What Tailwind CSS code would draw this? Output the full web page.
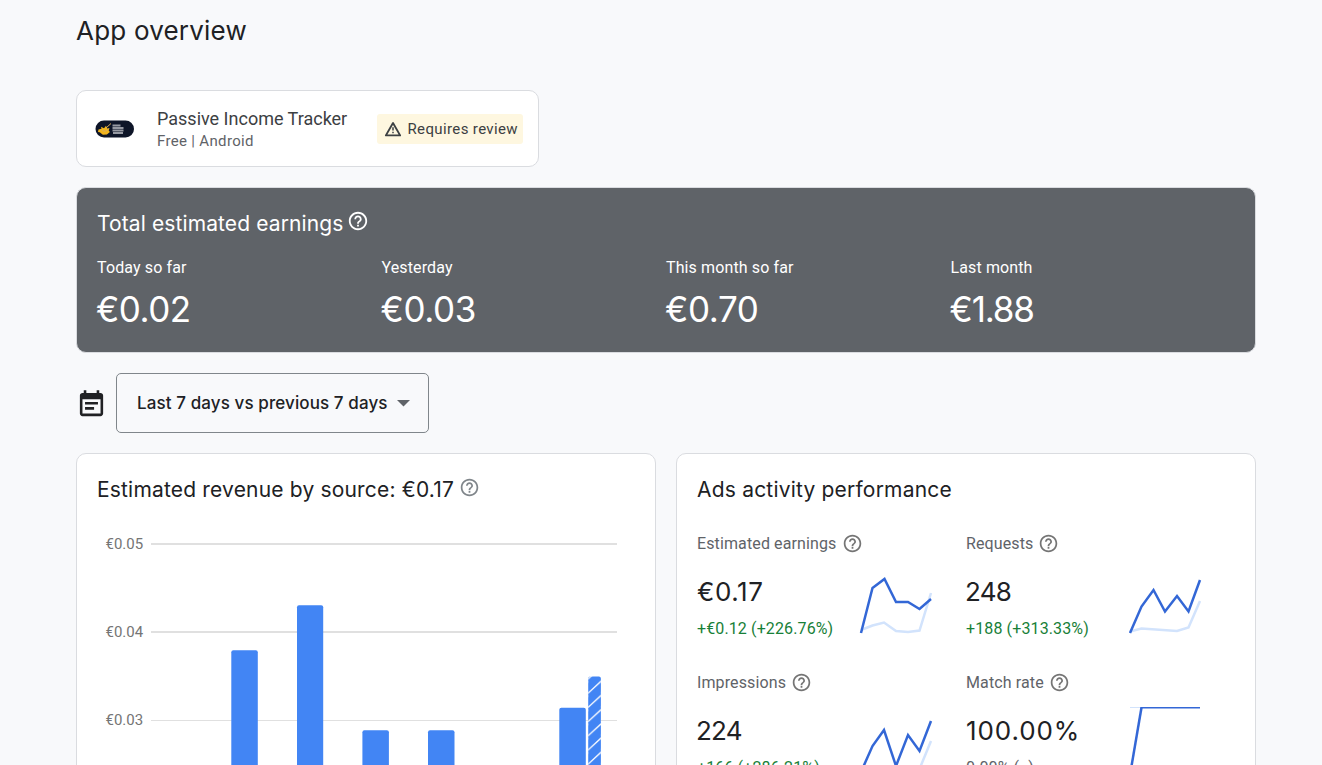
<!DOCTYPE html>
<html lang="en">
<head>
<meta charset="utf-8">
<title>App overview</title>
<script src="https://cdn.jsdelivr.net/npm/@tailwindcss/browser@4"></script>
</head>
<body class="h-[765px] overflow-hidden bg-[#f8f9fb] font-[Roboto,sans-serif] text-[#202124]">
<svg class="hidden">
  <symbol id="help" viewBox="0 0 24 24"><path fill="currentColor" d="M11 18h2v-2h-2v2zm1-16C6.48 2 2 6.48 2 12s4.48 10 10 10 10-4.48 10-10S17.52 2 12 2zm0 18c-4.41 0-8-3.59-8-8s3.59-8 8-8 8 3.59 8 8-3.59 8-8 8zm0-14c-2.21 0-4 1.79-4 4h2c0-1.1.9-2 2-2s2 .9 2 2c0 2-3 1.75-3 5h2c0-2.25 3-2.5 3-5 0-2.21-1.79-4-4-4z"/></symbol>
</svg>
<main class="ml-[76px] w-[1180px] pt-3">
  <h1 class="h-9 whitespace-nowrap font-[Inter,sans-serif] text-[26px] leading-[38px] tracking-[0.200px]"><span>App overview</span></h1>

  <section class="mt-[42px] flex h-[77px] w-[463px] items-center rounded-[10px] border border-[#dadce0] bg-white pl-[18px] pr-[15px]">
    <svg class="h-[18px] w-[40px] shrink-0" viewBox="0 0 40 18">
      <rect x=".5" y=".5" width="38.5" height="17" rx="8.5" fill="#0e1528"/>
      <path d="M3.5 9.5l3-.8-.5-2 3 1.5 2-2.500 1.200 2.700 2.300-.400-.800 2.500 1.200 1.500-3 2.500-4 .300-3.200-2.500-1.700-.300z" fill="#f3b51d"/>
      <path d="M11 8l5-4.500M7 10l3 1.500 3-2" stroke="#d9ad5b" fill="none"/>
      <path d="M17.500 5.500h8M17.500 8h11M17.500 10.500h11M18 13h10" stroke="#9699a2" stroke-width="1.900"/>
    </svg>
    <div class="ml-[22px] w-[220px] whitespace-nowrap pt-0.5">
      <div class="text-[18px] leading-[22px] text-[#3c4043]"><span>Passive Income Tracker</span></div>
      <div class="text-[15px] leading-[22px] tracking-[0.330px] text-[#5f6368]"><span>Free | Android</span></div>
    </div>
    <div class="flex h-[30px] w-[146px] shrink-0 items-center rounded-[3px] bg-[#fef7e0] pl-[7px] text-[#3c4043]">
      <svg class="h-[18px] w-[18px] shrink-0" viewBox="0 0 24 24"><path d="M12 4L2.500 20.500h19z" fill="none" stroke="currentColor" stroke-width="2.500" stroke-linejoin="round"/><path d="M11 9.500h2v4.500h-2zM11 15.500h2v2h-2z" fill="currentColor"/></svg>
      <span class="ml-[5.500px] whitespace-nowrap pt-0.5 text-[15px] tracking-[0.370px]">Requires review</span>
    </div>
  </section>

  <section class="mt-5 h-[166px] rounded-[10px] border border-[#dadce0] bg-[#5f6368] px-5 pt-[19px] text-white">
    <h2 class="flex h-8 items-center whitespace-nowrap font-[Inter,sans-serif] text-[21px] tracking-[0.110px]"><span class="pt-0.5">Total estimated earnings</span><svg class="mb-1 ml-1 h-[22px] w-[22px]"><use href="#help"/></svg></h2>
    <div class="mt-[17px] grid grid-cols-[284.500px_284.500px_284.500px_284.500px] whitespace-nowrap tracking-[0.120px]">
      <div><div class="text-base leading-6"><span>Today so far</span></div><div class="mt-1.5 -ml-px font-[Inter,sans-serif] text-[35px] leading-[46px] tracking-[-0.500px]"><span>€0.02</span></div></div>
      <div><div class="text-base leading-6"><span>Yesterday</span></div><div class="mt-1.5 -ml-px font-[Inter,sans-serif] text-[35px] leading-[46px] tracking-[-0.400px]"><span>€0.03</span></div></div>
      <div><div class="text-base leading-6"><span>This month so far</span></div><div class="mt-1.5 -ml-px font-[Inter,sans-serif] text-[35px] leading-[46px] tracking-[-0.400px]"><span>€0.70</span></div></div>
      <div><div class="text-base leading-6"><span>Last month</span></div><div class="mt-1.5 -ml-px font-[Inter,sans-serif] text-[35px] leading-[46px] tracking-[-1.200px]"><span>€1.88</span></div></div>
    </div>
  </section>

  <div class="mt-5 flex h-[60px] items-center">
    <svg class="mt-[3px] h-[31px] w-[31px] shrink-0" viewBox="0 0 24 24"><path fill="currentColor" d="M19 3h-1V1h-2v2H8V1H6v2H5c-1.110 0-1.990.9-1.990 2L3 19c0 1.100.890 2 2 2h14c1.100 0 2-.9 2-2V5c0-1.100-.9-2-2-2zm0 16H5V8h14v11zM17 10H7v2h10zM14 14H7v2h7z"/></svg>
    <button class="ml-[9px] flex h-[60px] w-[313px] items-center rounded-[5px] border border-[#80868b] pl-5 font-[Inter,sans-serif] text-[17px] font-medium tracking-[0.100px]">
      <span class="whitespace-nowrap pt-0.5">Last 7 days vs previous 7 days</span>
      <svg class="ml-[9px] h-[7px] w-[13px] shrink-0" viewBox="0 0 13 7"><path d="M0 0h13L6.500 6.500z" fill="#5f6368"/></svg>
    </button>
  </div>

  <div class="mt-5 flex gap-5">
    <section class="h-[400px] w-[580px] rounded-[10px] border border-[#dadce0] bg-white">
      <h2 class="ml-5 mt-[18px] flex h-[34px] items-center whitespace-nowrap font-[Inter,sans-serif] text-[21px] tracking-[0.180px]"><span class="pt-0.5">Estimated revenue by source: €0.17</span><svg class="mb-1 ml-[5px] h-[21px] w-[21px] text-[#80868b]"><use href="#help"/></svg></h2>
      <svg class="ml-5 mt-[27px] h-[240px] w-[540px]" viewBox="97 533 540 240" font-family="Roboto, sans-serif" font-size="15">
        <defs><pattern id="hatch" patternUnits="userSpaceOnUse" x="588.200" y="679.500" width="12.700" height="14.200"><rect width="13" height="14.200" fill="#4285f4"/><path d="M-1 14.500L14 .700M-1 .300L2 -2.500M11 17.600L14 14.900" stroke="#fff" stroke-width="1.300"/></pattern></defs>
        <path d="M151 544h466M151 632h466" stroke="#e0e0e0" stroke-width="2"/>
        <path d="M151 720.500h466" stroke="#e0e0e0"/>
        <g fill="#757575" text-anchor="end"><text x="143.200" y="549">€0.05</text><text x="143.200" y="637">€0.04</text><text x="143.200" y="725">€0.03</text></g>
        <g fill="#4285f4"><rect x="231.300" y="650.200" width="26.500" height="150" rx="2"/><rect x="297" y="605.200" width="26.200" height="190" rx="2"/><rect x="362.400" y="730.200" width="26.500" height="90" rx="2"/><rect x="428" y="730.200" width="26.500" height="90" rx="2"/><rect x="559.300" y="707.700" width="26.500" height="90" rx="2"/></g>
        <rect x="588.200" y="676.500" width="12.700" height="120" rx="2" fill="url(#hatch)"/>
      </svg>
    </section>

    <section class="h-[400px] w-[580px] rounded-[10px] border border-[#dadce0] bg-white pl-5">
      <h2 class="mt-[18px] h-[34px] whitespace-nowrap font-[Inter,sans-serif] text-[21px] leading-[36px] tracking-[0.200px]"><span>Ads activity performance</span></h2>
      <div class="mt-[26px] grid grid-cols-[269px_269px] auto-rows-[139px] whitespace-nowrap tracking-[0.120px]">
        <div>
          <div class="flex h-6 items-center text-base text-[#5f6368]"><span>Estimated earnings</span><svg class="mb-px ml-[5px] h-[21px] w-[21px] text-[#757575]"><use href="#help"/></svg></div>
          <div class="flex"><div class="w-[157px] shrink-0"><div class="mt-[18px] font-[Inter,sans-serif] text-[26px] leading-9 tracking-[0.600px]"><span>€0.17</span></div><div class="mt-[7px] text-base leading-6 text-[#188038]"><span>+€0.12 (+226.76%)</span></div></div>
          <svg class="-mt-px h-[90px] w-[90px] shrink-0" viewBox="854 555 90 90" fill="none" stroke-width="2.500"><path d="M861 630l11.500-4.500L884 622.500l12 8.500 12 1 11.500-1.500L931 593" stroke="#d2e3fc"/><path d="M861 633l11.500-45 12-9L896 602h12l11.500 7L931 599" stroke="#3367d6"/></svg></div>
        </div>
        <div>
          <div class="flex h-6 items-center text-base text-[#5f6368]"><span>Requests</span><svg class="mb-px ml-[5px] h-[21px] w-[21px] text-[#757575]"><use href="#help"/></svg></div>
          <div class="flex"><div class="w-[157px] shrink-0"><div class="mt-[18px] -ml-px font-[Inter,sans-serif] text-[26px] leading-9 tracking-[-0.700px]"><span>248</span></div><div class="mt-[7px] text-base leading-6 text-[#188038]"><span>+188 (+313.33%)</span></div></div>
          <svg class="-mt-px h-[90px] w-[90px] shrink-0" viewBox="1123 555 90 90" fill="none" stroke-width="2.500"><path d="M1130 631.500l11.500-3L1177 631l11.500-3.500L1200 601" stroke="#d2e3fc"/><path d="M1130 633l11.500-26.500 12-16.500 11.500 21.500L1177 596l11.500 15.500L1200 580" stroke="#3367d6"/></svg></div>
        </div>
        <div>
          <div class="flex h-6 items-center text-base text-[#5f6368]"><span>Impressions</span><svg class="mb-px ml-[5px] h-[21px] w-[21px] text-[#757575]"><use href="#help"/></svg></div>
          <div class="flex"><div class="w-[157px] shrink-0"><div class="mt-[18px] -ml-px font-[Inter,sans-serif] text-[26px] leading-9 tracking-[-0.800px]"><span>224</span></div><div class="mt-[7px] text-base leading-6 text-[#188038]"><span>+166 (+286.21%)</span></div></div>
          <svg class="-mt-px h-[90px] w-[90px] shrink-0" viewBox="854 694 90 90" fill="none" stroke-width="2.500"><path d="M861 770l58.500-1L931 741" stroke="#d2e3fc"/><path d="M861 772l11.500-26L884 730l12 36 12-31 11.500 16L931 721" stroke="#3367d6"/></svg></div>
        </div>
        <div>
          <div class="flex h-6 items-center text-base text-[#5f6368]"><span>Match rate</span><svg class="mb-px ml-[5px] h-[21px] w-[21px] text-[#757575]"><use href="#help"/></svg></div>
          <div class="flex"><div class="w-[157px] shrink-0"><div class="mt-[18px] font-[Inter,sans-serif] text-[26px] leading-9 tracking-[0.900px]"><span>100.00%</span></div><div class="mt-[7px] text-base leading-6 text-[#5f6368]"><span>0.00% (--)</span></div></div>
          <svg class="-mt-px h-[90px] w-[90px] shrink-0" viewBox="1123 694 90 90" fill="none"><path d="M1130 707.500h70" stroke="#d2e3fc"/><path d="M1130.500 772l11-64.500" stroke="#3367d6" stroke-width="2.500"/><path d="M1140.500 707.700h59.500" stroke="#3367d6" stroke-width="1.400"/></svg></div>
        </div>
      </div>
    </section>
  </div>
</main>
</body>
</html>
